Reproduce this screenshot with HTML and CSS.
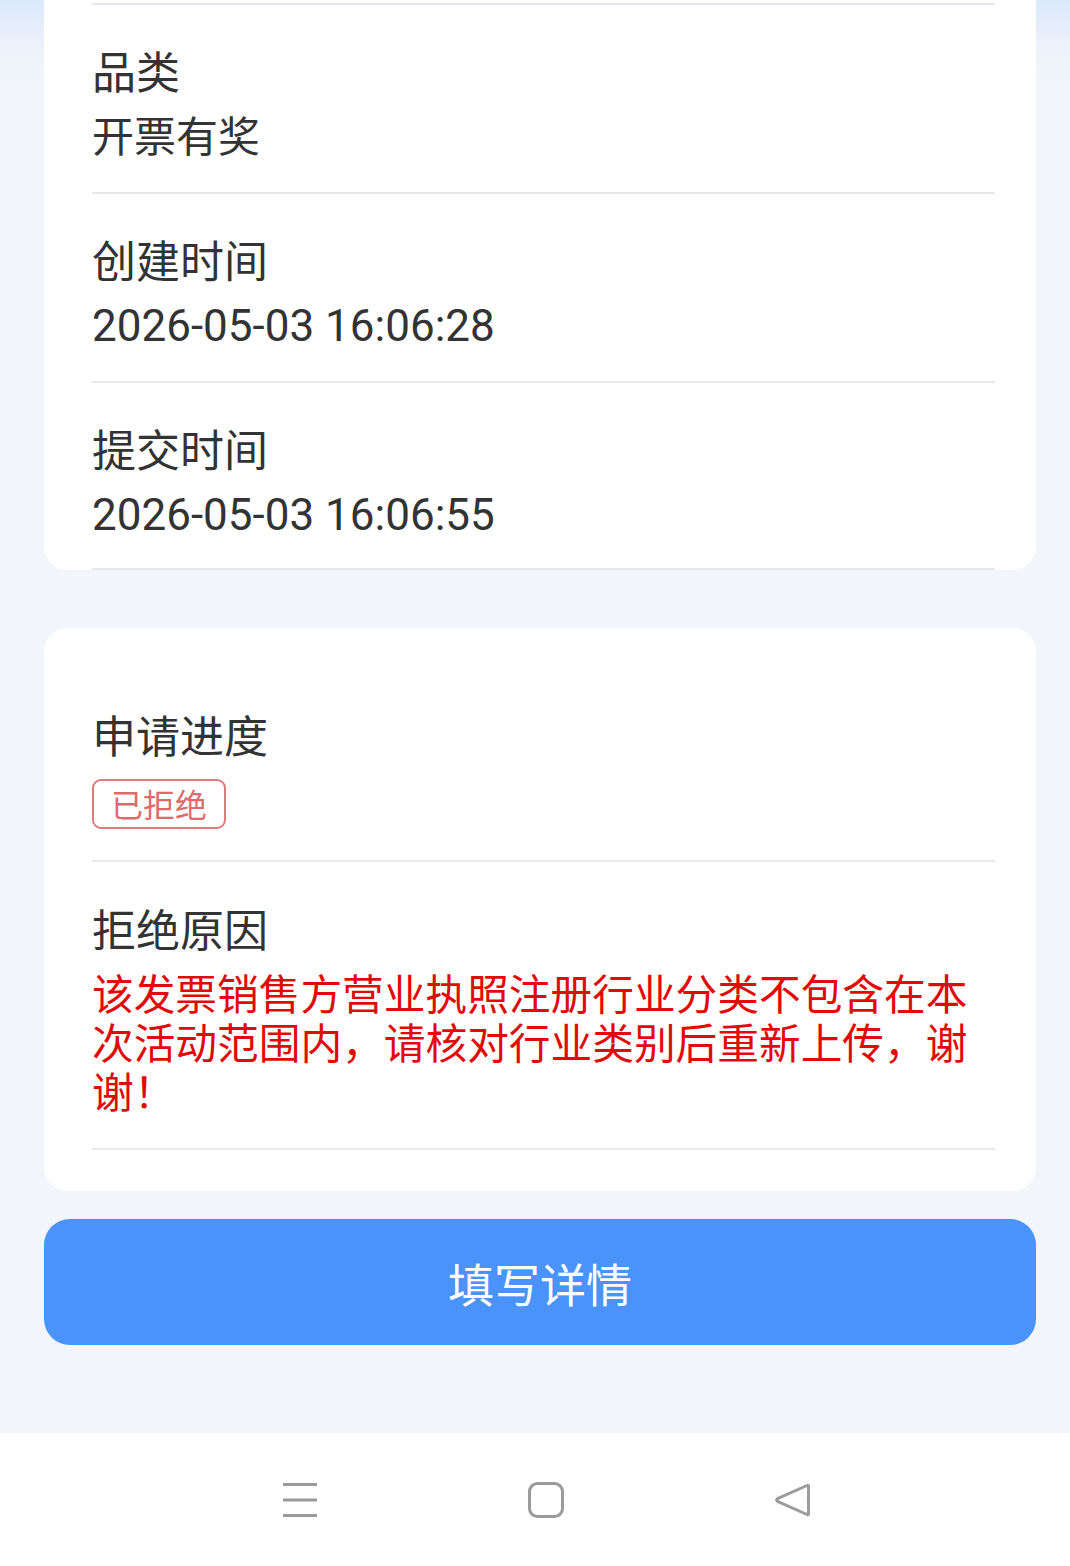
FILE: index.html
```html
<!DOCTYPE html>
<html lang="zh-CN">
<head>
<meta charset="utf-8">
<title>申请详情</title>
<link rel="stylesheet" href="styles.css">
</head>
<body>
<div class="screen">
  <main class="content">
    <section class="card card-top">
      <div class="row">
        <div class="label">品类</div>
        <div class="value">开票有奖</div>
      </div>
      <div class="row">
        <div class="label">创建时间</div>
        <div class="value num">2026-05-03 16:06:28</div>
      </div>
      <div class="row row-last">
        <div class="label">提交时间</div>
        <div class="value num">2026-05-03 16:06:55</div>
      </div>
    </section>

    <section class="card card-status">
      <div class="status-block">
        <div class="label">申请进度</div>
        <span class="tag">已拒绝</span>
      </div>
      <div class="reason-block">
        <div class="label">拒绝原因</div>
        <p class="reason">该发票销售方营业执照注册行业分类不包含在本次活动范围内，请核对行业类别后重新上传，谢谢！</p>
      </div>
    </section>

    <button class="primary-btn" type="button">填写详情</button>
  </main>

  <nav class="sys-nav">
    <svg class="nav-icon" width="36" height="36" viewBox="0 0 36 36" aria-hidden="true">
      <path d="M1 2.5H35M1 18H35M1 33.5H35" stroke="#9b9b9b" stroke-width="3" fill="none"/>
    </svg>
    <svg class="nav-icon" width="36" height="36" viewBox="0 0 36 36" aria-hidden="true">
      <rect x="1.5" y="1.5" width="33" height="33" rx="8" stroke="#9b9b9b" stroke-width="3" fill="none"/>
    </svg>
    <svg class="nav-icon" width="36" height="36" viewBox="0 0 36 36" aria-hidden="true">
      <path d="M33 3.5 Q34.5 2.5 34.5 4.5 V31.5 Q34.5 33.5 33 32.5 L3.5 19.3 Q1.8 18 3.5 16.7 Z" stroke="#9b9b9b" stroke-width="3" fill="none" stroke-linejoin="round"/>
    </svg>
  </nav>
</div>
</body>
</html>
```

FILE: styles.css
```css
* {
  box-sizing: border-box;
}

html, body {
  margin: 0;
  padding: 0;
}

body {
  width: 1070px;
  height: 1566px;
  overflow: hidden;
  font-family: "Noto Sans CJK SC", "Noto Sans", sans-serif;
  color: #333333;
  background: #f2f6fa;
}

.screen {
  width: 1070px;
  height: 1566px;
  display: flex;
  flex-direction: column;
  background: linear-gradient(180deg, #dce9fb 0px, #eaf1fb 40px, #f2f6fa 80px, #f2f6fa 100%);
}

.content {
  flex: 1;
  display: flex;
  flex-direction: column;
  padding: 0 34px 0 44px;
}

.card {
  background: #ffffff;
  border-radius: 24px;
  padding: 0 41px 0 48px;
}

.card-top {
  border-radius: 0 0 24px 24px;
  padding-top: 3px;
}

.row {
  border-top: 2px solid #e6e8eb;
  padding: 33px 0 26px;
}

.row-last {
  border-bottom: 2px solid #e6e8eb;
  padding-bottom: 24px;
}

.label,
.value {
  font-size: 42px;
  line-height: 64px;
  color: #333333;
  white-space: nowrap;
}

.label {
  font-size: 44px;
}

.num {
  font-family: "Roboto", "Noto Sans CJK SC", sans-serif;
  font-size: 44px;
  height: 64px;
  padding-top: 3px;
}

.card-status {
  margin-top: 58px;
  padding-bottom: 41px;
}

.status-block {
  padding: 74px 0 31px;
  display: flex;
  flex-direction: column;
  align-items: flex-start;
}

.tag {
  margin-top: 13px;
  height: 50px;
  padding: 0 17px;
  border: 2.5px solid #e07a7a;
  border-radius: 9px;
  color: #e06a6a;
  font-size: 32px;
  line-height: 44px;
}

.reason-block {
  border-top: 2px solid #e6e8eb;
  border-bottom: 2px solid #e6e8eb;
  padding: 34px 0 33px;
}

.reason {
  margin: 8px 0 0;
  font-size: 41.7px;
  line-height: 49px;
  color: #e10a0a;
  width: 880px;
}

.primary-btn {
  margin-top: 28px;
  width: 992px;
  height: 126px;
  margin-left: 0;
  border: none;
  border-radius: 26px;
  background: #4a93fb;
  color: #ffffff;
  font-family: "Noto Sans CJK SC", sans-serif;
  font-size: 46px;
  line-height: 126px;
  padding: 0;
}

.sys-nav {
  height: 133px;
  background: #ffffff;
  display: flex;
  align-items: center;
  justify-content: center;
  gap: 210px;
  padding-left: 22px;
}

.nav-icon {
  display: block;
}
```
